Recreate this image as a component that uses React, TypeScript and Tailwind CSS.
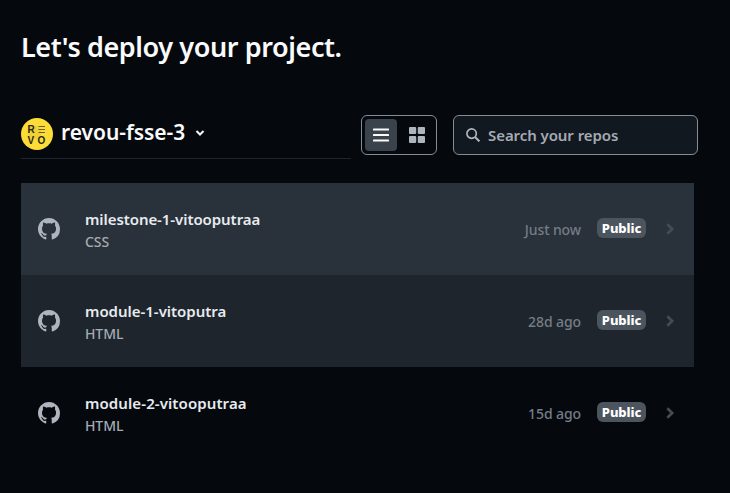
import React from "react";

type Repo = { name: string; language: string; updated: string; row: string };

const repos: Repo[] = [
  { name: "milestone-1-vitooputraa", language: "CSS", updated: "Just now", row: "bg-[#29313a] tracking-[-0.07px]" },
  { name: "module-1-vitoputra", language: "HTML", updated: "28d ago", row: "bg-[#1e252d] tracking-[-0.02px]" },
  { name: "module-2-vitooputraa", language: "HTML", updated: "15d ago", row: "bg-[#05090d] tracking-[0.1px]" },
];

function GithubIcon() {
  return (
    <svg width="22" height="22" viewBox="0 0 16 16" fill="#aeb5be">
      <path d="M8 0C3.58 0 0 3.58 0 8c0 3.54 2.29 6.53 5.47 7.59.4.07.55-.17.55-.38 0-.19-.01-.82-.01-1.49-2.01.37-2.53-.49-2.69-.94-.09-.23-.48-.94-.82-1.13-.28-.15-.68-.52-.01-.53.63-.01 1.08.58 1.23.82.72 1.21 1.87.87 2.33.66.07-.52.28-.87.51-1.07-1.78-.2-3.64-.89-3.64-3.95 0-.87.31-1.59.82-2.15-.08-.2-.36-1.02.08-2.12 0 0 .67-.21 2.2.82.64-.18 1.32-.27 2-.27s1.36.09 2 .27c1.53-1.04 2.2-.82 2.2-.82.44 1.1.16 1.92.08 2.12.51.56.82 1.27.82 2.15 0 3.07-1.87 3.75-3.65 3.95.29.25.54.73.54 1.48 0 1.07-.01 1.93-.01 2.2 0 .21.15.46.55.38A8.01 8.01 0 0 0 16 8c0-4.42-3.58-8-8-8Z" />
    </svg>
  );
}

function Avatar() {
  return (
    <svg width="32" height="32" viewBox="0 0 32 32">
      <circle cx="16" cy="16" r="16" fill="#fddc38" />
      <circle cx="13.5" cy="14.5" r="7" fill="#efd137" />
      <g fill="#272719" fontFamily="Liberation Sans, sans-serif" fontWeight="700" fontSize="10">
        <text x="6.5" y="15">R</text>
        <text x="6.5" y="26">V</text>
        <text x="16.5" y="26">O</text>
      </g>
      <path d="M17.5 8.5h6.5M17.5 11.5h6.5M17.5 14.5h6.5" stroke="#6b6128" strokeWidth="1" />
    </svg>
  );
}

export default function App() {
  return (
    <main className="h-[493px] w-[730px] overflow-hidden bg-[#05090d] pl-[21px] font-['Noto_Sans','Open_Sans',sans-serif] font-semibold">
      <h1 className="flex h-[115px] items-start pt-[29px] text-[27px] leading-[36px] tracking-[-0.4px] text-[#fafbfc]">
        Let's deploy your project.
      </h1>

      <div className="flex h-[68px] items-start">
        <div className="flex h-[44px] w-[330px] items-start border-b border-[#1e242b] pt-[3px]">
          <Avatar />
          <span className="ml-2 text-[21px] leading-[28px] tracking-[-0.03px] text-[#fafbfc]">revou-fsse-3</span>
          <svg className="mt-[11px] ml-[10px]" width="10" height="8" viewBox="0 0 10 8" fill="none">
            <path d="M1.5 2 5 5.5 8.5 2" stroke="#f4f6f8" strokeWidth="2" />
          </svg>
        </div>

        <div className="ml-2.5 flex h-10 w-[76px] items-center gap-1 rounded-[6px] border border-[#858c95] px-[3px]">
          <button className="flex h-8 w-8 items-center justify-center rounded-[4px] bg-[#3a424c]">
            <svg width="16" height="14" viewBox="0 0 16 14" fill="#fafbfc">
              <rect y="0.5" width="16" height="2" rx="0.5" />
              <rect y="6" width="16" height="2" rx="0.5" />
              <rect y="11.5" width="16" height="2" rx="0.5" />
            </svg>
          </button>
          <button className="flex h-8 w-8 items-center justify-center">
            <svg width="16" height="16" viewBox="0 0 16 16" fill="#aeb5be">
              <rect width="7.2" height="7" rx="1" />
              <rect x="8.8" width="7.2" height="7" rx="1" />
              <rect y="9" width="7.2" height="7" rx="1" />
              <rect x="8.8" y="9" width="7.2" height="7" rx="1" />
            </svg>
          </button>
        </div>

        <label className="ml-4 flex h-10 w-[245px] items-center rounded-[6px] border border-[#858c95] bg-[#12181f] pl-3">
          <svg width="14" height="14" viewBox="0 0 14 14" fill="none" stroke="#aeb5be">
            <circle cx="5.6" cy="5.6" r="4.7" strokeWidth="1.7" />
            <path d="m9 9 4.4 4.4" strokeWidth="2" />
          </svg>
          <span className="ml-2 text-[15px] leading-5 tracking-[-0.07px] text-[#a4abb4]">Search your repos</span>
        </label>
      </div>

      <ul className="w-[673px]">
        {repos.map((repo) => (
          <li key={repo.name} className={`flex h-[92px] items-center pr-[19px] pl-[17px] ${repo.row}`}>
            <GithubIcon />
            <div className="ml-[25px] flex-1 pt-px">
              <div className="text-[15px] leading-6 text-[#e7ebef]">{repo.name}</div>
              <div className="text-[14px] font-medium leading-[22px] tracking-[-0.1px] text-[#a4abb4]">{repo.language}</div>
            </div>
            <span className="mr-4 pt-[2px] text-[14px] font-medium leading-5 tracking-[-0.1px] text-[#747c86]">{repo.updated}</span>
            <span className="mb-[2px] flex h-5 w-[49px] items-center justify-center rounded-[6px] bg-[#4c545e] text-[13px] font-extrabold leading-5 tracking-[-0.1px] text-white">
              Public
            </span>
            <svg className="ml-5" width="9" height="12" viewBox="0 0 9 12" fill="none">
              <path d="m1.3 1.3 4.8 4.7-4.8 4.7" stroke="#444b54" strokeWidth="2.8" />
            </svg>
          </li>
        ))}
      </ul>
    </main>
  );
}
